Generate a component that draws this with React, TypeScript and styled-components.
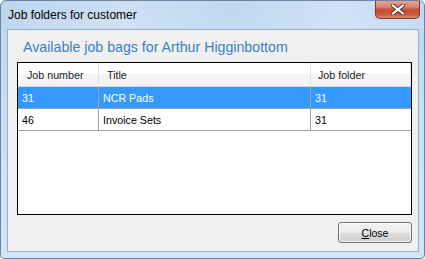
import { ReactElement } from 'react';
import styled, { createGlobalStyle } from 'styled-components';

const GlobalStyle = createGlobalStyle`
  html, body {
    margin: 0;
    padding: 0;
    background: #ffffff;
  }
  body {
    font-family: "Liberation Sans", Arial, sans-serif;
  }
`;

const Window = styled.div`
  box-sizing: border-box;
  width: 425px;
  height: 259px;
  display: flex;
  flex-direction: column;
  border: 1px solid #6a84a2;
  border-radius: 6px 6px 4px 4px;
  background: linear-gradient(180deg, #bcd5ee 0%, #c9def4 40%, #d3e5f7 100%);
  overflow: hidden;
`;

const TitleBar = styled.div`
  height: 28px;
  flex-shrink: 0;
  display: flex;
  align-items: flex-start;
  padding-left: 7px;
  padding-right: 4px;
  background: linear-gradient(90deg, rgba(255,255,255,0.0) 0%, rgba(255,255,255,0.25) 30%, rgba(255,255,255,0.05) 55%, rgba(255,255,255,0.3) 80%, rgba(255,255,255,0.1) 100%);
`;

const Caption = styled.span`
  font-size: 12px;
  line-height: 14px;
  margin-top: 7px;
  color: #000000;
`;

const CaptionClose = styled.div`
  margin-left: auto;
  margin-top: -1px;
  width: 45px;
  height: 19px;
  box-sizing: border-box;
  border: 1px solid #7d3a30;
  border-top: none;
  border-radius: 0 0 5px 5px;
  background: linear-gradient(180deg, #e9a99b 0%, #d7826f 40%, #c44a33 55%, #cc5a42 80%, #d98a70 100%);
  display: flex;
  align-items: center;
  justify-content: center;
`;

const Client = styled.div`
  flex: 1;
  display: flex;
  flex-direction: column;
  margin: 0 5px 6px 6px;
  border: 1px solid #94aecb;
  background: #f0f0f0;
  padding: 9px 6px 8px 9px;
  min-height: 0;
`;

const Heading = styled.div`
  margin-left: 6px;
  font-size: 14.2px;
  line-height: 17px;
  color: #3a7fc8;
`;

const ListView = styled.div`
  flex: 1;
  margin-top: 6px;
  border: 1px solid #000000;
  background: #ffffff;
  display: flex;
  flex-direction: column;
`;

const HeaderRow = styled.div`
  display: flex;
  height: 24px;
  box-sizing: border-box;
  border-bottom: 1px solid #d5d5d5;
  background: linear-gradient(180deg, #ffffff 0%, #ffffff 45%, #f4f5f7 50%, #f2f3f5 100%);
`;

const HeaderCell = styled.div<{ $width?: number; $pad: number }>`
  ${(p) => (p.$width ? `width: ${p.$width}px; flex-shrink: 0;` : 'flex: 1;')}
  box-sizing: border-box;
  padding-left: ${(p) => p.$pad}px;
  border-right: 1px solid #dfe3e8;
  display: flex;
  align-items: center;
  font-size: 10.7px;
  color: #1e1e1e;
`;

const Row = styled.div<{ $selected?: boolean }>`
  display: flex;
  height: 22px;
  box-sizing: border-box;
  border-bottom: 1px solid #a0a0a0;
  background: ${(p) => (p.$selected ? '#3399ff' : '#ffffff')};
  color: ${(p) => (p.$selected ? '#ffffff' : '#000000')};
`;

const Cell = styled.div<{ $width?: number }>`
  ${(p) => (p.$width ? `width: ${p.$width}px; flex-shrink: 0;` : 'flex: 1;')}
  box-sizing: border-box;
  padding-left: 4px;
  border-right: 1px solid #a0a0a0;
  display: flex;
  align-items: center;
  font-size: 10.7px;

  &:last-child {
    border-right: none;
  }
`;

const Footer = styled.div`
  display: flex;
  justify-content: flex-end;
  margin-top: 7px;
`;

const Button = styled.button`
  width: 74px;
  height: 21px;
  box-sizing: border-box;
  border: 1px solid #707070;
  border-radius: 3px;
  background: linear-gradient(180deg, #f2f2f2 0%, #ebebeb 50%, #dddddd 51%, #cfcfcf 100%);
  box-shadow: inset 0 0 0 1px rgba(255, 255, 255, 0.7);
  font-family: "Liberation Sans", Arial, sans-serif;
  font-size: 10.5px;
  color: #000000;
  padding: 0;
  display: flex;
  align-items: center;
  justify-content: center;
`;

const columns = [
  { title: 'Job number', width: 81, pad: 9 },
  { title: 'Title', width: 212, pad: 8 },
  { title: 'Job folder', pad: 7 },
];

const rows = [
  { job: '31', title: 'NCR Pads', folder: '31', selected: true },
  { job: '46', title: 'Invoice Sets', folder: '31', selected: false },
];

const CloseGlyph = (): ReactElement => (
  <svg width="14" height="11" viewBox="0 0 14 11">
    <path d="M2 1.5 L12 9.5 M12 1.5 L2 9.5" stroke="#4a2a26" strokeWidth="4" strokeLinecap="square" />
    <path d="M2 1.5 L12 9.5 M12 1.5 L2 9.5" stroke="#ffffff" strokeWidth="2.2" strokeLinecap="square" />
  </svg>
);

const App = (): ReactElement => {
  return (
    <>
      <GlobalStyle />
      <Window>
        <TitleBar>
          <Caption>Job folders for customer</Caption>
          <CaptionClose>
            <CloseGlyph />
          </CaptionClose>
        </TitleBar>
        <Client>
          <Heading>Available job bags for Arthur Higginbottom</Heading>
          <ListView>
            <HeaderRow>
              {columns.map((c) => (
                <HeaderCell key={c.title} $width={c.width} $pad={c.pad}>
                  {c.title}
                </HeaderCell>
              ))}
            </HeaderRow>
            {rows.map((r) => (
              <Row key={r.job} $selected={r.selected}>
                <Cell $width={81}>{r.job}</Cell>
                <Cell $width={212}>{r.title}</Cell>
                <Cell>{r.folder}</Cell>
              </Row>
            ))}
          </ListView>
          <Footer>
            <Button>
              <u>C</u>lose
            </Button>
          </Footer>
        </Client>
      </Window>
    </>
  );
};

export default App;
